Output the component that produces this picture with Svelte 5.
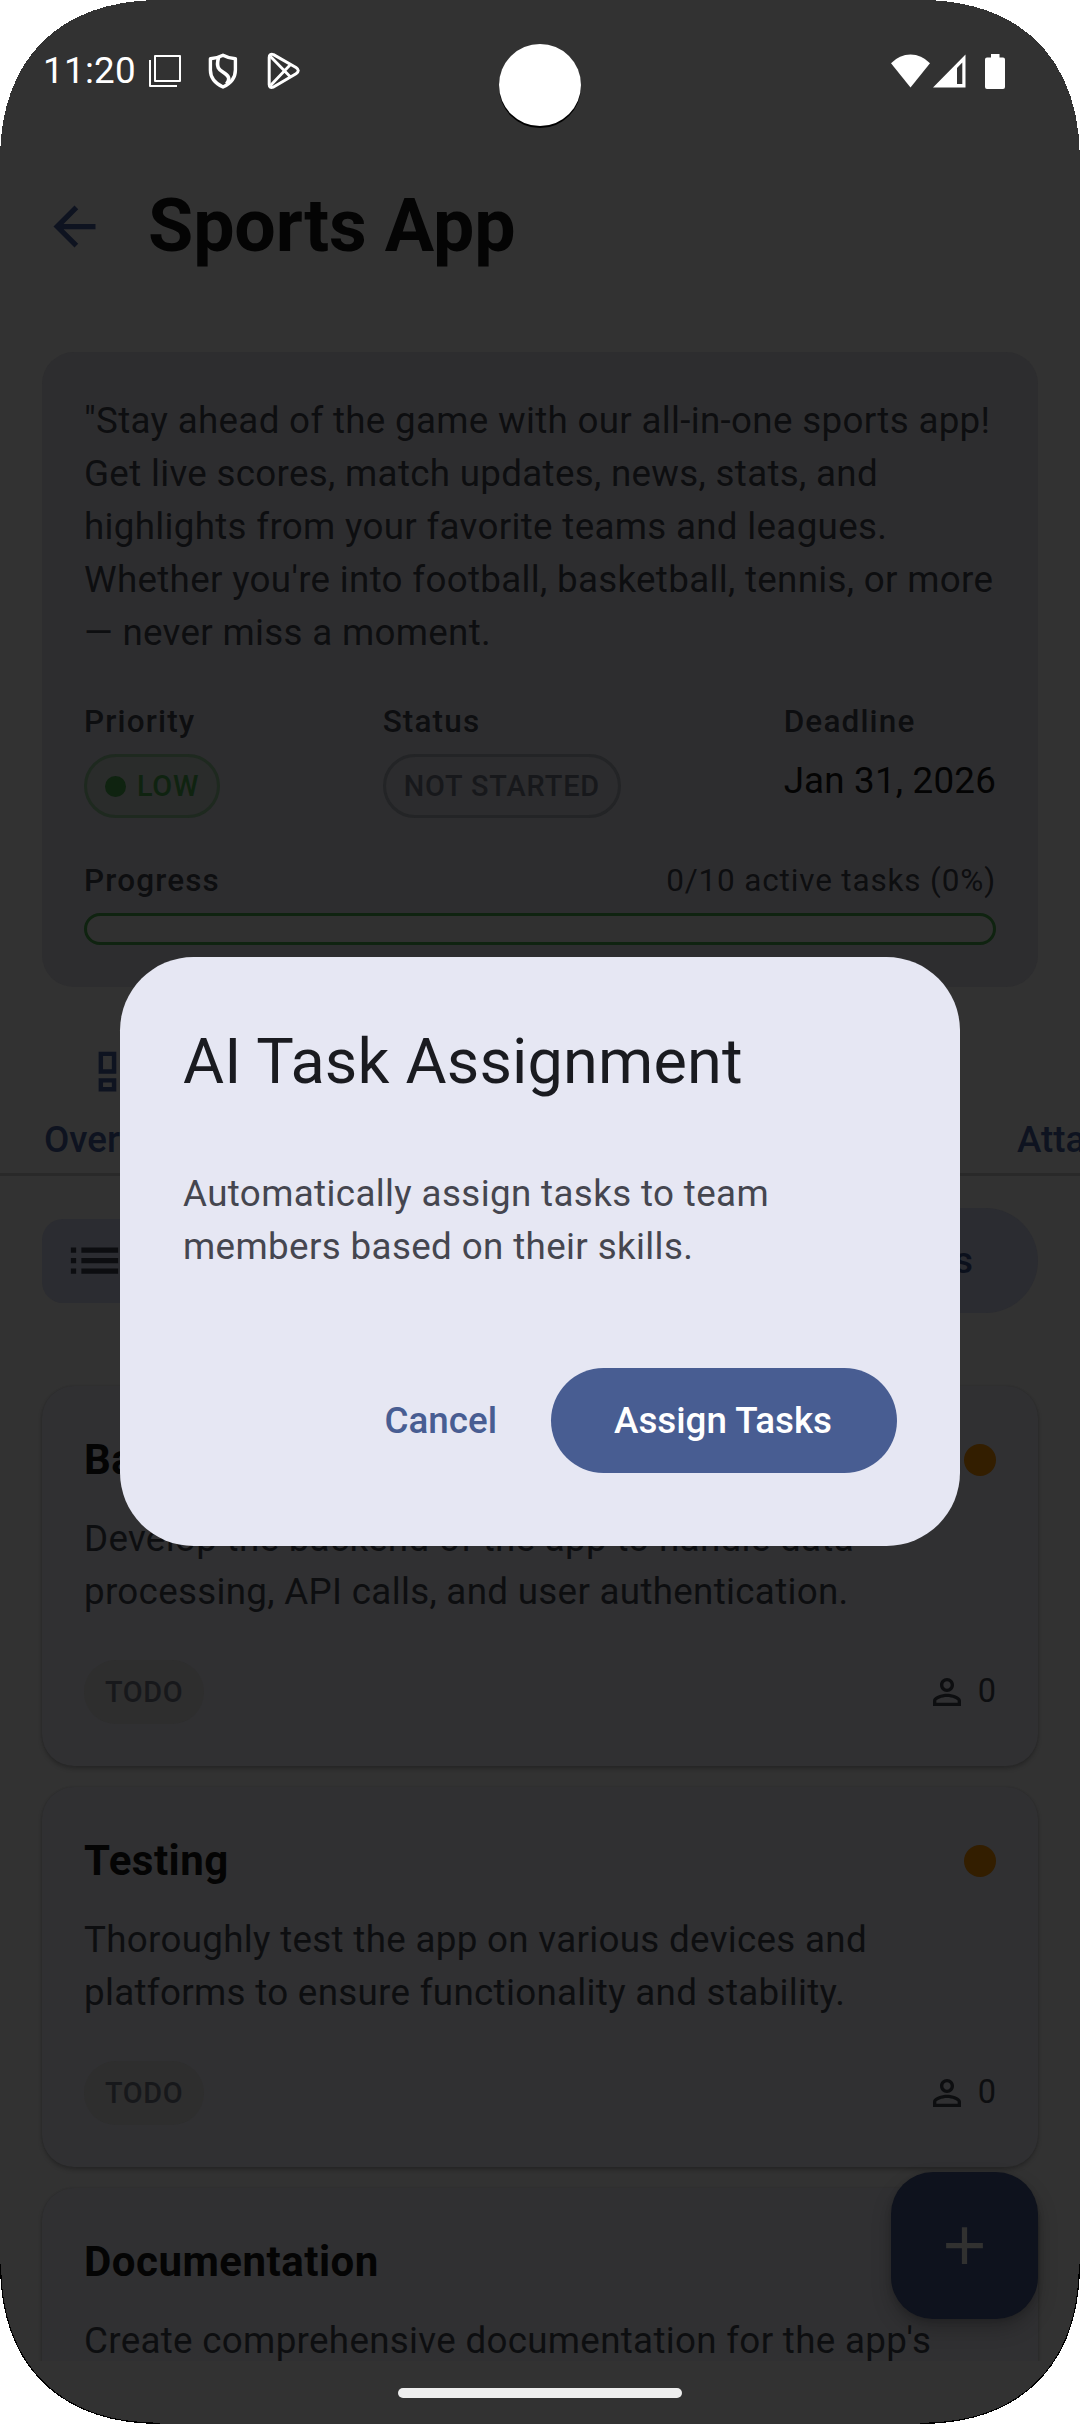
<script>
  const tasks = [
    {
      title: 'Backend',
      lines: ['Develop the backend of the app to handle data', 'processing, API calls, and user authentication.'],
      members: 0
    },
    {
      title: 'Testing',
      lines: ['Thoroughly test the app on various devices and', 'platforms to ensure functionality and stability.'],
      members: 0
    },
    {
      title: 'Documentation',
      lines: ["Create comprehensive documentation for the app's"]
    }
  ];

  const summary = [
    '"Stay ahead of the game with our all-in-one sports app!',
    'Get live scores, match updates, news, stats, and',
    'highlights from your favorite teams and leagues.',
    "Whether you're into football, basketball, tennis, or more",
    '— never miss a moment.'
  ];

  const corners = ['tl', 'tr', 'bl', 'br'];
</script>

<div class="screen">
  <header class="status">
    <span class="time">11:20</span>
    <svg class="s-copy" viewBox="0 0 34 36" width="34" height="36">
      <path d="M6 3H31V28H6Z M1 7V33H28" fill="none" stroke="#fff" stroke-width="2" stroke-linejoin="round" />
    </svg>
    <svg class="s-shield" viewBox="0 0 30 36" width="30" height="36">
      <path d="M15 2.200Q21 5.400 27.400 5.800V17C27.400 25 22 30.800 15 34C8 30.800 2.400 25 2.400 17V5.800Q9 5.400 15 2.200Z" fill="none" stroke="#fff" stroke-width="3.400" stroke-linejoin="round" />
      <path d="M10.500 4.500C7.500 16 12 17 17 20.500C22 24 21.500 27 18.500 31" fill="none" stroke="#fff" stroke-width="3.600" />
    </svg>
    <svg class="s-play" viewBox="0 0 34 38" width="34" height="38">
      <path d="M2.200 5.500Q2.200 1.500 6.500 2.600L29 15.500Q33.500 18.500 29 21.800L6.500 35Q2.200 36.500 2.200 32.500Z" fill="none" stroke="#fff" stroke-width="3" stroke-linejoin="round" />
      <path d="M3.500 4.500L23.500 25M3.500 33.500L23.500 12.500" fill="none" stroke="#fff" stroke-width="2.800" />
    </svg>
    <svg class="s-wifi" viewBox="0 0 39 34" width="39" height="34">
      <path d="M19.500 33.500L0 9.200Q8.500 .5 19.500 .5T39 9.200Z" fill="#fff" />
    </svg>
    <svg class="s-signal" viewBox="0 0 33 34" width="33" height="34">
      <path d="M32.500 .5V33.500H0Z M29.300 8.500L24 14V30H29.300Z" fill="#fff" fill-rule="evenodd" />
    </svg>
    <svg class="s-battery" viewBox="0 0 20 35" width="20" height="35">
      <path d="M6 0H14.500V3.500H18Q20 3.500 20 5.500V33Q20 35 18 35H2Q0 35 0 33V5.500Q0 3.500 2 3.500H6Z" fill="#fff" />
    </svg>
  </header>

  <div class="appbar">
    <svg viewBox="0 0 24 24" width="63" height="63">
      <path d="M20 11H7.830l5.590-5.590L12 4l-8 8 8 8 1.410-1.410L7.830 13H20v-2z" fill="#0e1320" />
    </svg>
    <h1>Sports App</h1>
  </div>

  <section class="summary">
    <p class="body">
      {#each summary as line}<span>{line}</span>{/each}
    </p>
    <div class="facts">
      <div class="fact">
        <span class="label">Priority</span>
        <span class="pill low"><i></i>LOW</span>
      </div>
      <div class="fact">
        <span class="label">Status</span>
        <span class="pill">NOT STARTED</span>
      </div>
      <div class="fact">
        <span class="label">Deadline</span>
        <span class="date">Jan 31, 2026</span>
      </div>
    </div>
    <div class="progress-head">
      <span class="label">Progress</span>
      <span class="count">0/10 active tasks (0%)</span>
    </div>
    <div class="bar"></div>
  </section>

  <nav class="tabs">
    <div class="tab">
      <svg viewBox="0 0 24 24" width="53" height="53">
        <path d="M19 5v2h-4V5h4M9 5v6H5V5h4m10 8v6h-4v-6h4M9 17v2H5v-2h4M21 3h-8v6h8V3zM11 3H3v10h8V3zm10 8h-8v10h8V11zm-10 4H3v6h8v-6z" fill="#0e1320" />
      </svg>
      <span>Overview</span>
    </div>
    <div class="tab last"><span>Attachments</span></div>
  </nav>

  <div class="actions">
    <div class="view">
      <svg viewBox="0 0 24 24" width="63" height="63">
        <path d="M3 13h2v-2H3v2zm0 4h2v-2H3v2zm0-8h2V7H3v2zm4 4h14v-2H7v2zm0 4h14v-2H7v2zM7 7v2h14V7H7z" fill="#0c0d10" />
      </svg>
    </div>
    <div class="assign">Assign Tasks</div>
  </div>

  <main class="list">
    {#each tasks as task}
      <article class="card">
        <div class="row">
          <h2>{task.title}</h2>
          <i class="dot"></i>
        </div>
        <p class="body">
          {#each task.lines as line}<span>{line}</span>{/each}
        </p>
        {#if task.members !== undefined}
          <div class="row foot">
            <span class="todo">TODO</span>
            <span class="members">
              <svg viewBox="0 0 24 24" width="42" height="42">
                <path d="M12 5.900c1.160 0 2.100.940 2.100 2.100s-.940 2.100-2.100 2.100S9.900 9.160 9.900 8s.940-2.100 2.100-2.100m0 9c2.970 0 6.100 1.460 6.100 2.100v1.100H5.900V17c0-.640 3.130-2.100 6.100-2.100M12 4C9.790 4 8 5.790 8 8s1.790 4 4 4 4-1.790 4-4-1.790-4-4-4zm0 9c-2.670 0-8 1.340-8 4v3h16v-3c0-2.660-5.330-4-8-4z" fill="#0d0e10" />
              </svg>
              <span class="n">{task.members}</span>
            </span>
          </div>
        {/if}
      </article>
    {/each}
  </main>

  <button class="fab" aria-label="Add task">
    <svg viewBox="0 0 24 24" width="63" height="63">
      <path d="M19 13h-6v6h-2v-6H5v-2h6V5h2v6h6v2z" fill="#313130" />
    </svg>
  </button>

  <div class="dialog">
    <h3>AI Task Assignment</h3>
    <p class="body"><span>Automatically assign tasks to team</span><span>members based on their skills.</span></p>
    <div class="buttons">
      <button class="cancel">Cancel</button>
      <button class="confirm">Assign Tasks</button>
    </div>
  </div>

  <div class="camera"></div>
  <div class="home"></div>
  {#each corners as c}
    <svg class="corner {c}" viewBox="0 0 160 160" width="160" height="160" shape-rendering="crispEdges">
      {#if c[0] === 'b'}
        <path d="M0 160C0 59 59 0 160 0" fill="none" stroke="#000" stroke-width="2.500" />
      {/if}
      <path d="M0 0H160C59 0 0 59 0 160Z" fill="#fff" />
    </svg>
  {/each}
</div>

<style>
  :global(body) {
    margin: 0;
    background: #fff;
  }
  .screen {
    position: relative;
    display: flex;
    flex-direction: column;
    width: 1080px;
    height: 2424px;
    overflow: hidden;
    background: #323232;
    color: #0d0e10;
    font-family: Roboto, 'Liberation Sans', sans-serif;
    font-size: 36.75px;
  }
  h1, h2, h3, p {
    margin: 0;
  }
  svg {
    display: block;
    flex: none;
  }
  span {
    white-space: nowrap;
  }
  button {
    padding: 0;
    border: 0;
    font: inherit;
  }

  .status {
    display: flex;
    align-items: center;
    box-sizing: border-box;
    height: 142px;
    padding: 0 75px 0 43px;
    color: #fff;
  }
  .time {
    width: 106px;
    padding-bottom: 2px;
    line-height: 43px;
    letter-spacing: 0.3px;
  }
  .s-shield { margin-left: 25px; }
  .s-play { margin-left: 29px; }
  .s-wifi { margin-left: auto; }
  .s-signal { margin-left: 3px; }
  .s-battery { margin-left: 19px; }

  .appbar {
    display: flex;
    align-items: center;
    height: 168px;
    padding-left: 43px;
    gap: 42px;
  }
  h1 {
    color: #040404;
    font-size: 73.5px;
    font-weight: 700;
    line-height: 94px;
    letter-spacing: -0.12px;
    white-space: nowrap;
  }

  .summary {
    display: flex;
    flex-direction: column;
    box-sizing: border-box;
    height: 635px;
    margin: 42px 42px 0;
    padding: 42px;
    border-radius: 32px;
    background: #2d2d2f;
  }
  .body {
    display: flex;
    flex-direction: column;
    line-height: 53px;
    letter-spacing: 0.31px;
  }
  .facts {
    display: flex;
    justify-content: space-between;
    margin-top: 42px;
  }
  .fact {
    display: flex;
    flex-direction: column;
    align-items: flex-start;
    gap: 11px;
  }
  .label {
    font-size: 31.5px;
    font-weight: 500;
    line-height: 42px;
    letter-spacing: 1.15px;
  }
  .pill {
    display: flex;
    align-items: center;
    box-sizing: border-box;
    height: 64px;
    padding: 0 18px;
    border: 3px solid #232426;
    border-radius: 32px;
    background: #2c2c2e;
    color: #17181b;
    font-size: 28.875px;
    font-weight: 500;
    letter-spacing: 0.9px;
  }
  .low {
    gap: 11px;
    border-color: #1e291f;
    background: #2a2c2b;
    color: #0f2310;
    letter-spacing: 0.7px;
  }
  .low i {
    width: 21px;
    height: 21px;
    border-radius: 50%;
    background: #0f2310;
  }
  .date {
    color: #040404;
    line-height: 53px;
    letter-spacing: 0.2px;
  }
  .progress-head {
    display: flex;
    justify-content: space-between;
    margin-top: 42px;
  }
  .count {
    font-size: 31.5px;
    line-height: 42px;
    letter-spacing: 0.84px;
  }
  .bar {
    box-sizing: border-box;
    height: 32px;
    margin-top: 11px;
    border: 3px solid #0f2310;
    border-radius: 16px;
    background: #303030;
  }

  .tabs {
    display: flex;
    align-items: flex-end;
    justify-content: space-between;
    box-sizing: border-box;
    height: 189px;
    padding: 0 0 7px 44px;
    border-bottom: 3px solid #292929;
    color: #0e1320;
    font-weight: 500;
  }
  .tab {
    display: flex;
    flex-direction: column;
    align-items: center;
    gap: 15px;
    line-height: 53px;
  }
  .tab svg {
    margin-right: 2px;
  }
  .last {
    align-items: flex-start;
    width: 63px;
  }

  .actions {
    display: flex;
    align-items: center;
    justify-content: space-between;
    margin: 32px 42px 0;
    height: 105px;
  }
  .view {
    box-sizing: border-box;
    width: 105px;
    height: 84px;
    padding: 10.5px 21px;
    border-radius: 21px;
    background: #2b2c31;
  }
  .assign {
    padding: 0 65px 0 63px;
    border-radius: 53px;
    background: #2b2c31;
    color: #0b101c;
    font-weight: 500;
    line-height: 105px;
  }

  .list {
    display: flex;
    flex: none;
    flex-direction: column;
    gap: 21px;
    height: 996px;
    margin-top: 52px;
    padding: 21px 42px 0;
    box-sizing: border-box;
    overflow: hidden;
  }
  .card {
    display: flex;
    flex: none;
    flex-direction: column;
    box-sizing: border-box;
    height: 380px;
    padding: 42px;
    border-radius: 32px;
    background: #303032;
    box-shadow: 0 3px 4px rgba(0, 0, 0, 0.22), 0 0 2px rgba(0, 0, 0, 0.12);
  }
  .row {
    display: flex;
    align-items: center;
    justify-content: space-between;
  }
  h2 {
    color: #040404;
    font-size: 42px;
    font-weight: 700;
    line-height: 64px;
    letter-spacing: 0.5px;
  }
  .dot {
    width: 32px;
    height: 32px;
    border-radius: 50%;
    background: #331e00;
  }
  .card .body {
    margin-top: 20px;
  }
  .foot {
    margin-top: 42px;
  }
  .todo {
    padding: 0 21px;
    border-radius: 32px;
    background: #2e2e2e;
    color: #17181b;
    font-size: 28.875px;
    font-weight: 500;
    line-height: 64px;
    letter-spacing: 0.6px;
  }
  .members {
    display: flex;
    align-items: center;
    gap: 10px;
    font-size: 32.5px;
  }
  .n {
    padding-bottom: 2px;
  }

  .fab {
    position: absolute;
    left: 891px;
    top: 2172px;
    display: grid;
    place-items: center;
    width: 147px;
    height: 147px;
    border-radius: 42px;
    background: #0e121d;
    box-shadow: 0 10px 20px rgba(0, 0, 0, 0.22), 0 2px 6px rgba(0, 0, 0, 0.14);
  }

  .dialog {
    position: absolute;
    left: 120px;
    top: 957px;
    display: flex;
    flex-direction: column;
    box-sizing: border-box;
    width: 840px;
    height: 589px;
    padding: 63px;
    border-radius: 73.5px;
    background: #e6e7f3;
    color: #45464f;
  }
  h3 {
    color: #1a1b20;
    font-size: 63px;
    font-weight: 400;
    line-height: 84px;
    letter-spacing: 0.17px;
  }
  .dialog .body {
    margin-top: 63px;
    letter-spacing: 0.37px;
  }
  .buttons {
    display: flex;
    justify-content: flex-end;
    gap: 21px;
    margin-top: 95px;
    font-weight: 500;
  }
  .buttons button {
    height: 105px;
    border-radius: 53px;
  }
  .cancel {
    padding: 0 33px 0 31px;
    background: none;
    color: #485d92;
  }
  .confirm {
    width: 346px;
    padding-right: 2px;
    background: #485d92;
    color: #fff;
  }

  .camera {
    position: absolute;
    left: 499px;
    top: 44px;
    width: 82px;
    height: 82px;
    border-radius: 50%;
    background: #fff;
    box-shadow: 0 2px 0 #000;
  }
  .home {
    position: absolute;
    left: 398px;
    top: 2388px;
    width: 284px;
    height: 10px;
    border-radius: 5px;
    background: #eee;
  }
  .corner {
    position: absolute;
  }
  .tl { left: 0; top: 0; }
  .tr { right: 0; top: 0; transform: scaleX(-1); }
  .bl { left: 0; bottom: 0; transform: scaleY(-1); }
  .br { right: 0; bottom: 0; transform: scale(-1); }
</style>
